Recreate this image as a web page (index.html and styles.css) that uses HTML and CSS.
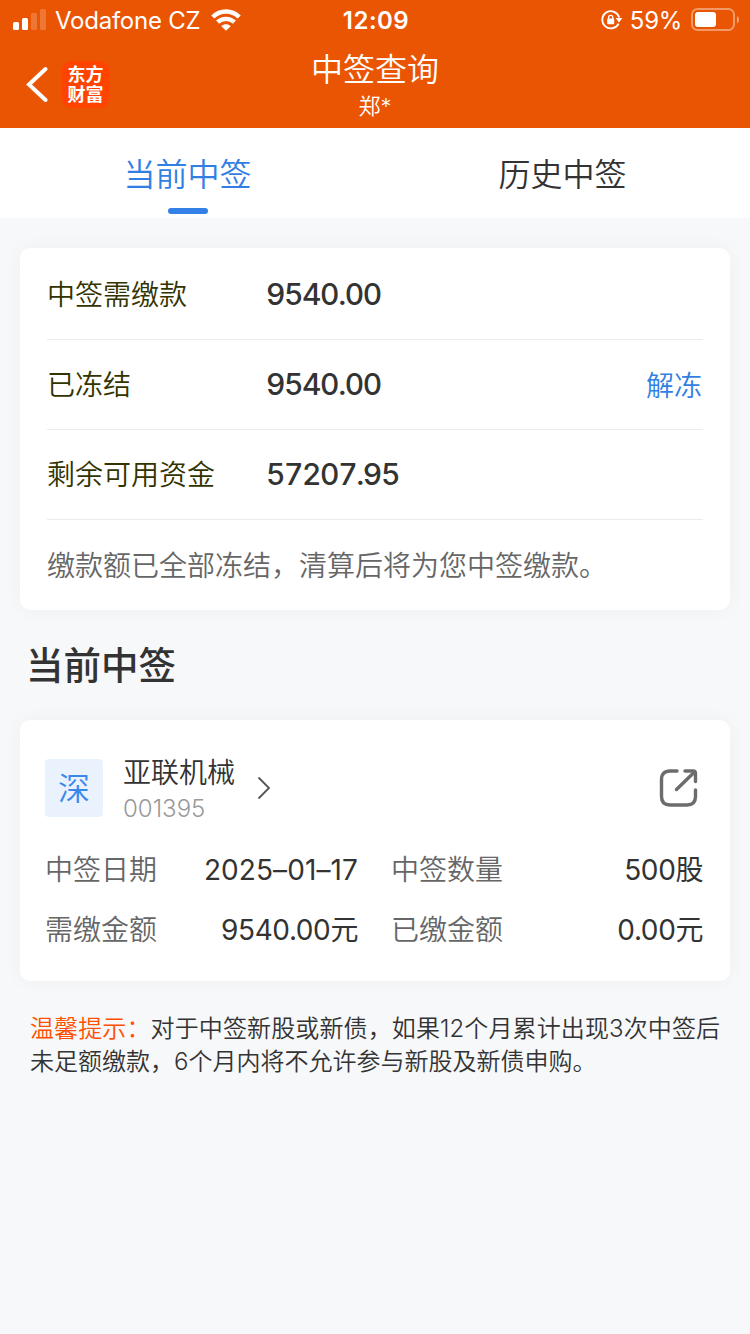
FILE: index.html
```html
<!DOCTYPE html>
<html lang="zh-CN">
<head>
  <meta charset="UTF-8" />
  <meta name="viewport" content="width=device-width, initial-scale=1.0" />
  <title>中签查询</title>
  <link rel="stylesheet" href="styles.css">
</head>

<body>
  <header class="header">
    <div class="status-bar">
      <div class="status-left">
        <svg class="signal" width="33" height="22" viewBox="0 0 33 22" fill="#fff">
          <rect x="0" y="13" width="6" height="8" rx="1.6" />
          <rect x="9" y="9" width="6" height="12" rx="1.6" />
          <rect x="18" y="4" width="6" height="17" rx="1.6" opacity="0.2" />
          <rect x="27" y="0" width="6" height="21" rx="1.6" opacity="0.2" />
        </svg>
        <span class="carrier">Vodafone CZ</span>
        <svg class="wifi" width="30" height="22" viewBox="0 0 30 22" fill="none" stroke="#fff" stroke-width="4.4">
          <path d="M1.8 8C9.2 0.6 20.8 0.6 28.2 8" />
          <path d="M6.6 13.2C11.3 8.8 18.7 8.8 23.4 13.2" />
          <path d="M15 21.8L10.3 17.2C13 14.7 17 14.7 19.7 17.2Z" fill="#fff" stroke="none" />
        </svg>
      </div>
      <div class="status-time">12:09</div>
      <div class="status-right">
        <svg class="lock" width="22" height="20" viewBox="0 0 22 20" fill="none" stroke="#fff">
          <path d="M17.6 13.6A8.6 8.6 0 1 1 18.2 7.5" stroke-width="1.9" />
          <path d="M14.6 8H21.4L18 12.6Z" fill="#fff" stroke="none" />
          <rect x="6.2" y="8.6" width="7" height="5.6" rx="0.8" fill="#fff" stroke="none" />
          <path d="M7.6 9V7.4a2.1 2.1 0 0 1 4.2 0V9" stroke-width="1.3" />
        </svg>
        <span class="percent">59%</span>
        <svg class="battery" width="48" height="24" viewBox="0 0 48 24" fill="#fff">
          <rect x="1" y="1" width="42" height="21" rx="5.5" fill="none" stroke="#fff" stroke-width="2" opacity="0.4" />
          <rect x="4" y="4" width="21" height="15" rx="3" />
          <path d="M46 8C48.6 9.5 48.6 13.8 46 15.2Z" opacity="0.5" />
        </svg>
      </div>
    </div>
    <div class="nav-bar">
      <div class="nav-left">
        <svg class="back" width="22" height="36" viewBox="0 0 22 36" fill="none" stroke="#fff" stroke-width="4">
          <path d="M19.500 3L3 18.500L19.500 34" stroke-linecap="round" />
        </svg>
        <div class="logo"><span>东方</span><span>财富</span></div>
      </div>
      <div class="nav-title">
        <h1>中签查询</h1>
        <p>郑*</p>
      </div>
    </div>
  </header>

  <nav class="tabs">
    <a class="tab active">当前中签</a>
    <a class="tab">历史中签</a>
  </nav>

  <main class="content">
    <section class="card funds">
      <div class="fund-row">
        <span class="fund-label">中签需缴款</span>
        <span class="fund-value">9540.00</span>
      </div>
      <div class="fund-row">
        <span class="fund-label">已冻结</span>
        <span class="fund-value">9540.00</span>
        <a class="fund-link">解冻</a>
      </div>
      <div class="fund-row">
        <span class="fund-label">剩余可用资金</span>
        <span class="fund-value">57207.95</span>
      </div>
      <p class="fund-note">缴款额已全部冻结，清算后将为您中签缴款。</p>
    </section>

    <h2 class="section-title">当前中签</h2>

    <section class="card stock">
      <div class="stock-head">
        <div class="market">深</div>
        <div class="stock-info">
          <div class="stock-name">亚联机械</div>
          <div class="stock-code">001395</div>
        </div>
        <svg class="arrow" width="14" height="24" viewBox="0 0 14 24" fill="none" stroke="#555" stroke-width="1.8">
          <path d="M1.5 1.5L12 12L1.5 22.5" />
        </svg>
        <svg class="share" width="40" height="40" viewBox="0 0 40 40" fill="none" stroke="#6c6c6c" stroke-width="3.4" stroke-linecap="round" stroke-linejoin="round">
          <path d="M18 3H11Q2.500 3 2.500 11.500V28.500Q2.500 37 11 37H28Q36.500 37 36.500 28.500V22" />
          <path d="M26 3H34Q36.500 3 36.500 5.500V13.500" />
          <path d="M35.500 4L17.500 21.500" />
        </svg>
      </div>
      <div class="stock-grid">
        <span class="key">中签日期</span>
        <span class="val date">2025–01–17</span>
        <span class="key">中签数量</span>
        <span class="val">500股</span>
        <span class="key">需缴金额</span>
        <span class="val">9540.00元</span>
        <span class="key">已缴金额</span>
        <span class="val">0.00元</span>
      </div>
    </section>

    <p class="tips"><span class="tips-label">温馨提示：</span>对于中签新股或新债，如果12个月累计出现3次中签后未足额缴款，6个月内将不允许参与新股及新债申购。</p>
  </main>
</body>
</html>
```

FILE: styles.css
```css
* {
  box-sizing: border-box;
  margin: 0;
  padding: 0;
}

body {
  min-height: 100vh;
  font-family: Inter, "Noto Sans CJK SC", sans-serif;
  font-weight: 350;
  background: #f7f8fa;
  color: #333;
}

svg {
  display: block;
  flex-shrink: 0;
}

/* header */
.header {
  height: 128px;
  background: #ea5504;
  color: #fff;
}

.status-bar {
  display: grid;
  grid-template-columns: 1fr auto 1fr;
  align-items: center;
  height: 40px;
  padding: 0 11px 0 13px;
  font-size: 24px;
  font-weight: 400;
}

.status-left,
.status-right {
  display: flex;
  align-items: center;
}

.status-right {
  justify-content: flex-end;
}

.carrier {
  margin: 1px 11px 0 9px;
  letter-spacing: -0.25px;
}

.status-time {
  padding-top: 1px;
  font-weight: 600;
  letter-spacing: 0.5px;
}

.percent {
  margin: 1px 9px 0 7px;
  letter-spacing: -0.3px;
}

.nav-bar {
  display: grid;
  grid-template-columns: 1fr auto 1fr;
  height: 88px;
}

.nav-left {
  display: flex;
  align-items: center;
  gap: 14px;
  padding-left: 26px;
}

.logo {
  display: flex;
  flex-direction: column;
  align-items: center;
  justify-content: center;
  width: 47px;
  height: 47px;
  padding-top: 1px;
  border-radius: 9px;
  background: #ff4400;
  font-size: 18px;
  font-weight: 700;
  line-height: 20px;
}

.nav-title {
  padding-top: 9px;
  text-align: center;
}

.nav-title h1 {
  font-size: 32px;
  font-weight: 350;
  line-height: 42px;
}

.nav-title p {
  font-size: 22px;
  line-height: 30px;
}

/* tabs */
.tabs {
  display: flex;
  height: 90px;
  background: #fff;
}

.tab {
  flex: 1;
  display: flex;
  flex-direction: column;
  align-items: center;
  font-size: 32px;
  line-height: 94px;
}

.tab.active {
  color: #327fe4;
}

.tab.active::after {
  content: "";
  width: 40px;
  height: 6px;
  margin-top: -14px;
  border-radius: 3px;
  background: #3380e6;
}

.content {
  padding: 30px 20px;
}

.card {
  border-radius: 10px;
  background: #fff;
  box-shadow: 0 0 20px rgba(0, 0, 0, 0.04);
}

/* funds */
.funds {
  height: 362px;
  padding: 2px 27px 0;
}

.fund-row {
  display: flex;
  align-items: center;
  height: 90px;
  border-bottom: 1px solid #ebebeb;
  font-size: 28px;
}

.fund-label {
  width: 219px;
  padding-bottom: 4px;
  color: #330;
}

.fund-value {
  padding-bottom: 1px;
  font-size: 30px;
  font-weight: 500;
  font-variant-numeric: tabular-nums;
  letter-spacing: -1.4px;
}

.fund-link {
  margin-left: auto;
  padding: 0 1px 2px 0;
  color: #327fe4;
}

.fund-note {
  font-size: 28px;
  line-height: 93px;
  color: #666;
}

.section-title {
  padding-left: 6px;
  font-size: 37.5px;
  font-weight: 500;
  line-height: 111px;
  height: 110px;
}

/* stock */
.stock {
  height: 261px;
  padding: 34px 27px 0 25px;
}

.stock-head {
  display: flex;
  align-items: center;
  height: 68px;
}

.market {
  width: 58px;
  height: 58px;
  margin-right: 20px;
  border-radius: 4px;
  background: #e9f2fd;
  color: #3a87ee;
  font-size: 32px;
  line-height: 60px;
  text-align: center;
}

.stock-info {
  padding-top: 3px;
}

.stock-name {
  font-size: 28px;
  line-height: 38px;
}

.stock-code {
  font-size: 24px;
  line-height: 34px;
  color: #999;
}

.arrow {
  margin-left: 22px;
}

.share {
  margin: 0 4px 0 auto;
}

.stock-grid {
  display: grid;
  grid-template-columns: 112px 201px 145px 1fr;
  margin-top: 18px;
  font-size: 28px;
  line-height: 60px;
  white-space: nowrap;
}

.key {
  color: #666;
}

.stock-grid .key:nth-child(4n + 3) {
  padding-left: 33px;
}

.val {
  font-weight: 390;
  text-align: right;
  letter-spacing: -0.4px;
}

.date {
  letter-spacing: 0.1px;
}

.tips {
  padding: 31px 10px 0 10px;
  font-size: 24px;
  line-height: 33px;
  text-align: justify;
}

.tips-label {
  color: #ff5000;
}
```
